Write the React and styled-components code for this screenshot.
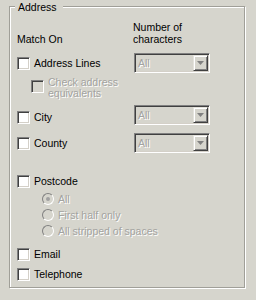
import styled, { createGlobalStyle } from 'styled-components';

const GlobalStyle = createGlobalStyle`
  body {
    margin: 0;
    background: #d6d5cd;
    font-family: "Liberation Sans", Arial, sans-serif;
    font-size: 10.5px;
    color: #000;
  }
`;

const Page = styled.div`
  width: 256px;
  height: 300px;
  box-sizing: border-box;
  padding: 6px 0 0 9px;
`;

const Group = styled.div`
  position: relative;
  width: 236px;
  height: 282px;
  box-sizing: border-box;
  border: 1px solid #a09f98;
  box-shadow: inset 1px 1px 0 #fff, 1px 1px 0 #fff;
  padding: 14px 0 0 7px;
  display: flex;
  flex-direction: column;
`;

// caption sits over the group's top edge
const Caption = styled.span`
  position: absolute;
  top: -6px;
  left: 5px;
  padding: 0 6px 0 3px;
  line-height: 12px;
  background: #d6d5cd;
`;

const Header = styled.div`
  display: grid;
  grid-template-columns: 116px auto;
  align-items: end;
  line-height: 12px;
`;

const Row = styled.div`
  display: flex;
  align-items: ${props => props.$align || 'center'};
  margin-top: ${props => props.$top || 0}px;
  min-height: ${props => props.$height || 13}px;
`;

const Option = styled.div`
  width: ${props => 116 - (props.$indent || 0)}px;
  padding-left: ${props => props.$indent || 0}px;
  margin-bottom: ${props => props.$lift || 0}px;
  display: flex;
  align-items: ${props => props.$align || 'center'};
  gap: 4px;
`;

const Check = styled.span`
  flex: none;
  width: 13px;
  height: 13px;
  box-sizing: border-box;
  margin-top: ${props => props.$offset || 0}px;
  border: 1px solid;
  border-color: #808080 #fff #fff #808080;
  box-shadow: inset 1px 1px 0 #404040, inset -1px -1px 0 #d4d0c8;
  background: ${props => (props.$disabled ? '#d6d5cd' : '#fff')};
`;

const Label = styled.span`
  line-height: ${props => props.$lh || 13}px;
  color: ${props => (props.$disabled ? '#a3a3a0' : '#000')};
  text-shadow: ${props => (props.$disabled ? '1px 1px 0 #fff' : 'none')};
`;

const RadioGroup = styled.div`
  margin-top: 3px;
`;

const RadioRow = styled.div`
  display: flex;
  align-items: center;
  gap: 4px;
  height: 16px;
  padding-left: 25px;
`;

const Radio = styled.span`
  flex: none;
  width: 12px;
  height: 12px;
  box-sizing: border-box;
  border-radius: 50%;
  border: 1px solid;
  border-color: #808080 #fff #fff #808080;
  background: #d6d5cd;
  display: flex;
  align-items: center;
  justify-content: center;

  &::after {
    content: '';
    display: ${props => (props.$on ? 'block' : 'none')};
    width: 4px;
    height: 4px;
    border-radius: 50%;
    background: #a0a0a0;
  }
`;

const ComboBox = styled.div`
  width: 76px;
  height: 20px;
  box-sizing: border-box;
  margin-left: 1px;
  padding: 1px;
  border: 1px solid;
  border-color: #808080 #fff #fff #808080;
  box-shadow: inset 1px 1px 0 #404040, inset -1px -1px 0 #d4d0c8;
  display: flex;
`;

const Value = styled.span`
  flex: 1;
  padding-left: 2px;
  line-height: 16px;
  color: #a3a3a0;
  text-shadow: 1px 1px 0 #fff;
`;

const DropButton = styled.span`
  width: 15px;
  box-sizing: border-box;
  border: 1px solid;
  border-color: #e4e3dc #404040 #404040 #e4e3dc;
  box-shadow: inset 1px 1px 0 #fff, inset -1px -1px 0 #808080;
  background: #d6d5cd;
  display: flex;
  align-items: center;
  justify-content: center;
`;

function Combo() {
  return (
    <ComboBox>
      <Value>All</Value>
      <DropButton>
        <svg width="7" height="4" viewBox="0 0 7 4">
          <polygon points="0,0 7,0 3.5,4" fill="#808080" />
        </svg>
      </DropButton>
    </ComboBox>
  );
}

function App() {
  return (
    <Page>
      <GlobalStyle />
      <Group>
        <Caption>Address</Caption>
        <Header>
          <span>Match On</span>
          <span>Number of<br />characters</span>
        </Header>

        <Row $top={8} $height={20}>
          <Option><Check /><Label>Address Lines</Label></Option>
          <Combo />
        </Row>

        <Row $top={4} $align="flex-start">
          <Option $indent={14} $align="flex-start">
            <Check $disabled $offset={3} />
            <Label $disabled $lh={11}>Check address equivalents</Label>
          </Option>
        </Row>

        <Row $top={6} $height={20} $align="flex-end">
          <Option $lift={1}><Check /><Label>City</Label></Option>
          <Combo />
        </Row>

        <Row $top={8} $height={20}>
          <Option><Check /><Label>County</Label></Option>
          <Combo />
        </Row>

        <Row $top={22}>
          <Option><Check /><Label>Postcode</Label></Option>
        </Row>

        <RadioGroup>
          <RadioRow><Radio $on /><Label $disabled>All</Label></RadioRow>
          <RadioRow><Radio /><Label $disabled>First half only</Label></RadioRow>
          <RadioRow><Radio /><Label $disabled>All stripped of spaces</Label></RadioRow>
        </RadioGroup>

        <Row $top={9}>
          <Option><Check /><Label>Email</Label></Option>
        </Row>

        <Row $top={7}>
          <Option><Check /><Label>Telephone</Label></Option>
        </Row>
      </Group>
    </Page>
  );
}

export default App;
